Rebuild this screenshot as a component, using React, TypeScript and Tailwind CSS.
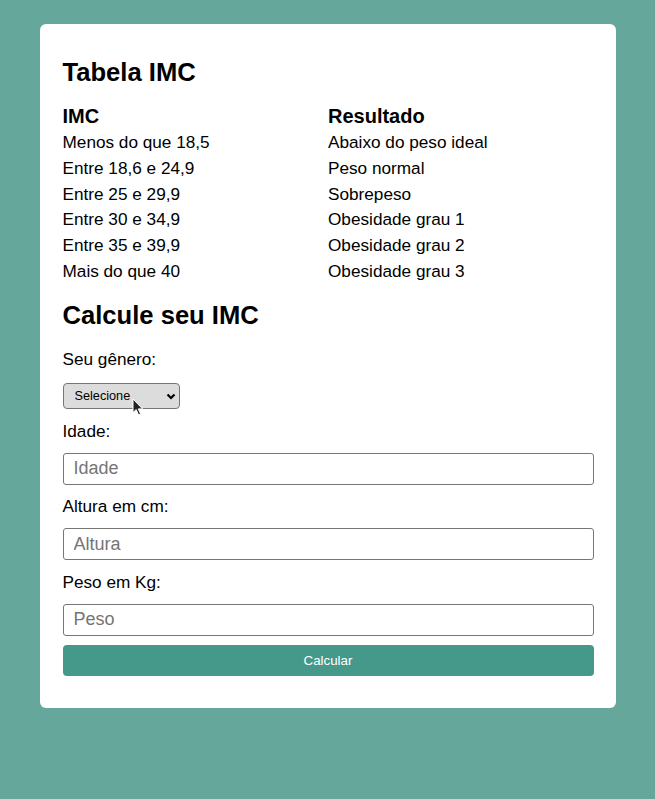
import React from "react";

const rows: [string, string][] = [
  ["Menos do que 18,5", "Abaixo do peso ideal"],
  ["Entre 18,6 e 24,9", "Peso normal"],
  ["Entre 25 e 29,9", "Sobrepeso"],
  ["Entre 30 e 34,9", "Obesidade grau 1"],
  ["Entre 35 e 39,9", "Obesidade grau 2"],
  ["Mais do que 40", "Obesidade grau 3"],
];

function Field({ label, placeholder }: { label: string; placeholder: string }) {
  return (
    <div className="flex flex-col">
      <label className="h-[26px] leading-[26px] text-[17.2px] mb-[9px]">{label}</label>
      <input
        placeholder={placeholder}
        className="h-[32px] w-full border border-[#767676] rounded-[3px] px-[10px] text-[18px] placeholder:text-[#757575] outline-none bg-white mb-[8.5px]"
        style={{ fontFamily: '"Liberation Sans", Arial, sans-serif' }}
      />
    </div>
  );
}

export default function App() {
  return (
    <div
      className="min-h-[799px] w-full bg-[#66a79b] pt-[24px] text-black"
      style={{ fontFamily: '"Liberation Sans", Arial, sans-serif' }}
    >
      <div className="mx-auto w-[576px] bg-white rounded-[6px] pl-[23px] pr-[22px] pt-[33px] pb-[32px]">
        <h2 className="text-[25.6px] font-bold h-[30px] leading-[30px]">Tabela IMC</h2>
        <div className="grid grid-cols-2 mt-[16px]">
          <div className="flex flex-col">
            <div className="text-[20px] font-bold h-[27px] leading-[26px]">IMC</div>
            {rows.map((r) => (
              <div key={r[0]} className="text-[17.2px] h-[25.8px] leading-[25.8px]">
                {r[0]}
              </div>
            ))}
          </div>
          <div className="flex flex-col">
            <div className="text-[20px] font-bold h-[27px] leading-[26px]">Resultado</div>
            {rows.map((r) => (
              <div key={r[1]} className="text-[17.2px] h-[25.8px] leading-[25.8px]">
                {r[1]}
              </div>
            ))}
          </div>
        </div>
        <h2 className="text-[25.6px] font-bold h-[30px] leading-[30px] mt-[15px]">Calcule seu IMC</h2>
        <div className="mt-[16px] flex flex-col">
          <label className="h-[26px] leading-[26px] text-[17.2px] mb-[11px]">Seu gênero:</label>
          <div className="relative w-[117px] h-[26px] mb-[9px]">
            <select
              className="appearance-none w-full h-full bg-[#dcdcdc] border border-[#767676] rounded-[4px] pl-[11px] text-[12.7px] text-black outline-none"
              style={{ fontFamily: '"Liberation Sans", Arial, sans-serif' }}
              defaultValue=""
            >
              <option value="">Selecione</option>
              <option value="m">Masculino</option>
              <option value="f">Feminino</option>
            </select>
            <svg
              className="absolute right-[4px] top-[10px] pointer-events-none"
              width="10"
              height="7"
              viewBox="0 0 10 7"
            >
              <path d="M1.5 1.5 L5 5 L8.5 1.5" fill="none" stroke="#000" strokeWidth="2.2" />
            </svg>
            <svg
              className="absolute left-[69px] top-[15px] pointer-events-none"
              width="12"
              height="19"
              viewBox="0 0 12 19"
            >
              <path
                d="M1 1 L1 14.5 L4.2 11.6 L6.6 17 L8.6 16.1 L6.3 10.9 L10.6 10.9 Z"
                fill="#222"
                stroke="#fff"
                strokeWidth="1"
                strokeLinejoin="round"
              />
            </svg>
          </div>
          <Field label="Idade:" placeholder="Idade" />
          <Field label="Altura em cm:" placeholder="Altura" />
          <Field label="Peso em Kg:" placeholder="Peso" />
          <button className="mt-[1px] h-[31px] w-full bg-[#45998b] text-white text-[13.33px] rounded-[4px]">
            Calcular
          </button>
        </div>
      </div>
    </div>
  );
}
